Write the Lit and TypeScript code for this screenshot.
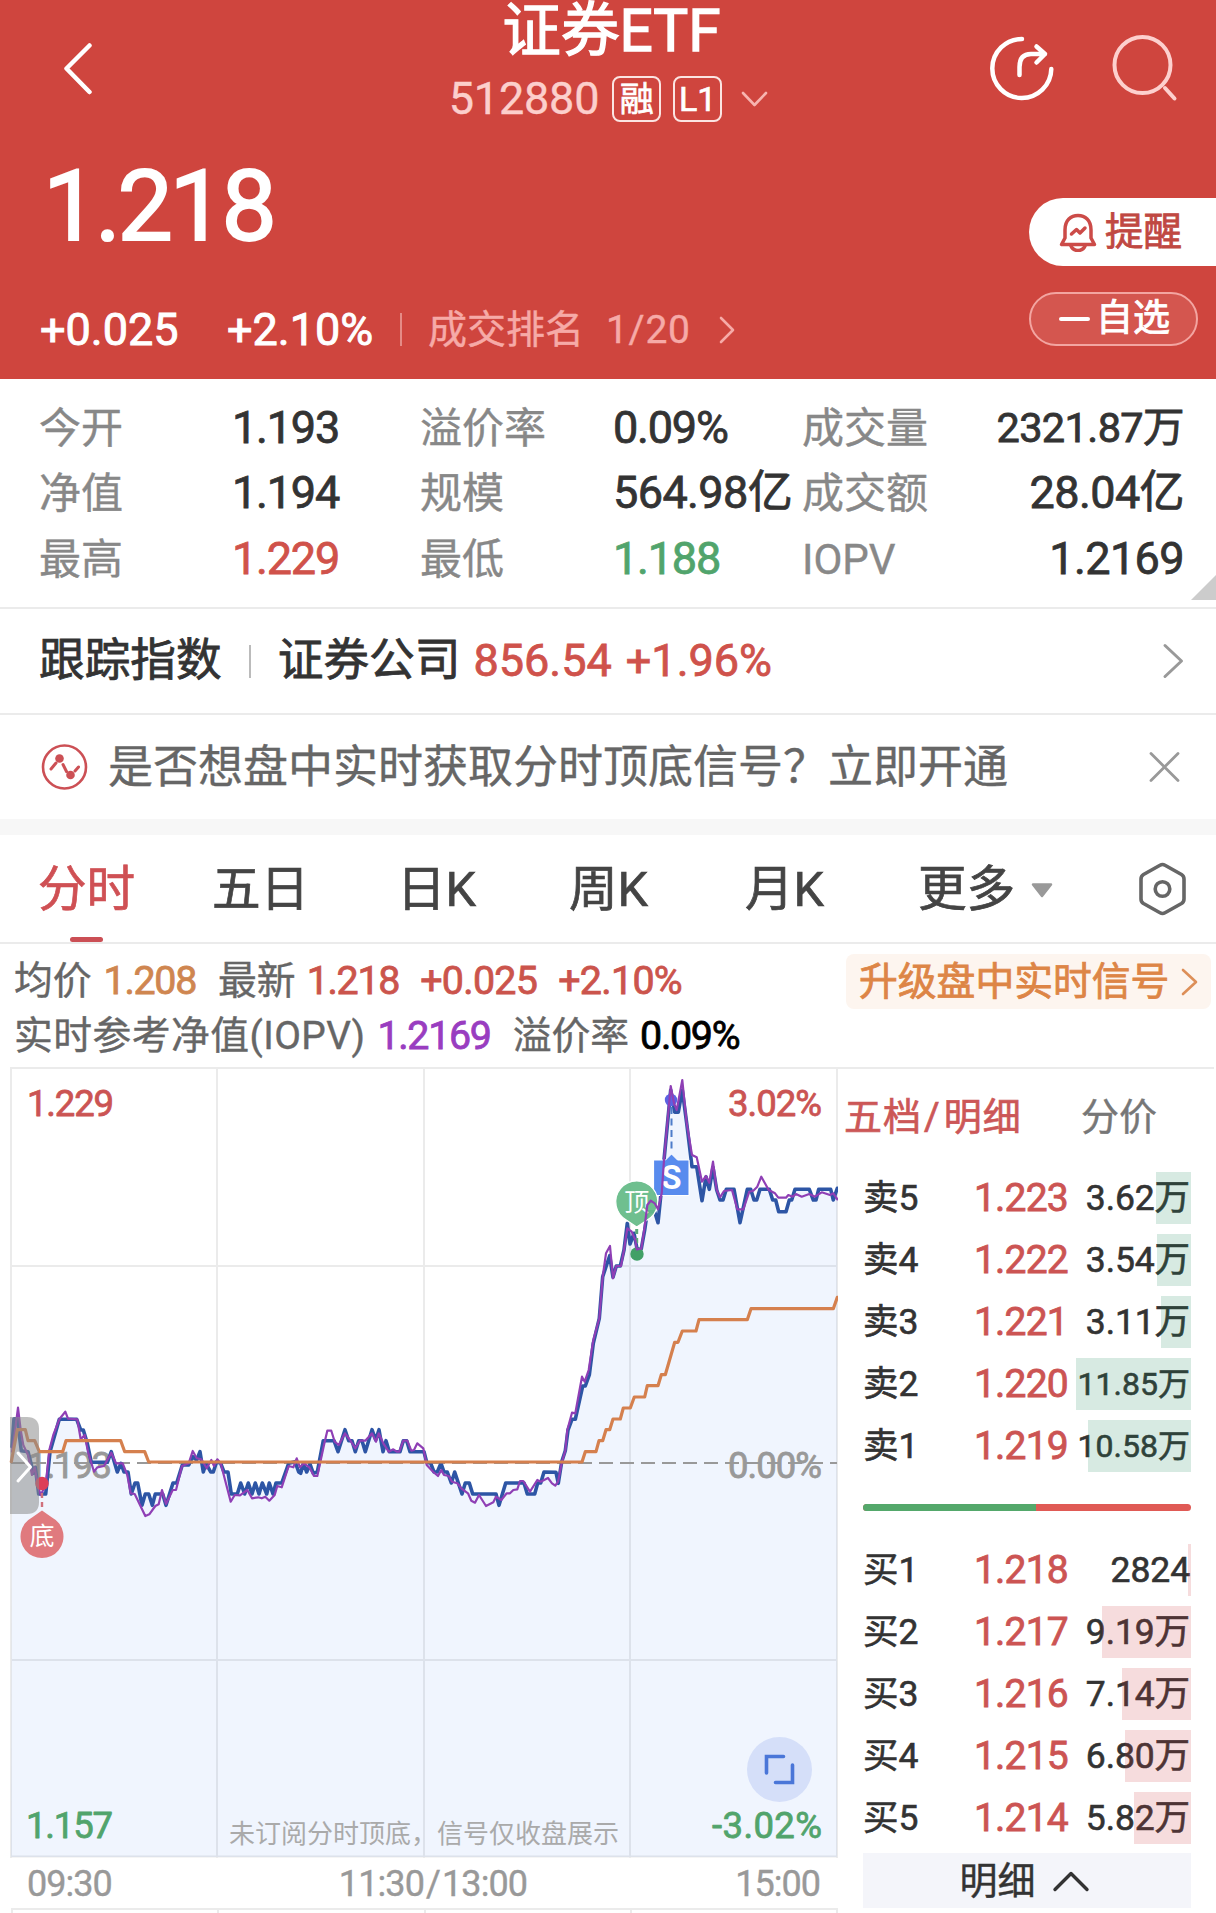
import { LitElement, html, svg, css } from "lit";
import { customElement } from "lit/decorators.js";

type Tone = "ink" | "up" | "down" | "dim";

interface Quote {
  label: string;
  value: string;
  tone?: Tone;
  size?: "small" | "tight";
}

interface Level {
  name: string;
  price: string;
  volume: string;
  bar: number;
}

const QUOTES: Quote[] = [
  { label: "今开", value: "1.193", size: "tight" },
  { label: "溢价率", value: "0.09%", size: "tight" },
  { label: "成交量", value: "2321.87万", size: "small" },
  { label: "净值", value: "1.194", size: "tight" },
  { label: "规模", value: "564.98亿" },
  { label: "成交额", value: "28.04亿" },
  { label: "最高", value: "1.229", tone: "up", size: "tight" },
  { label: "最低", value: "1.188", tone: "down", size: "tight" },
  { label: "IOPV", value: "1.2169" },
];

const ASKS: Level[] = [
  { name: "卖5", price: "1.223", volume: "3.62万", bar: 35 },
  { name: "卖4", price: "1.222", volume: "3.54万", bar: 34 },
  { name: "卖3", price: "1.221", volume: "3.11万", bar: 30 },
  { name: "卖2", price: "1.220", volume: "11.85万", bar: 115 },
  { name: "卖1", price: "1.219", volume: "10.58万", bar: 103 },
];

const BIDS: Level[] = [
  { name: "买1", price: "1.218", volume: "2824", bar: 3 },
  { name: "买2", price: "1.217", volume: "9.19万", bar: 89 },
  { name: "买3", price: "1.216", volume: "7.14万", bar: 69 },
  { name: "买4", price: "1.215", volume: "6.80万", bar: 66 },
  { name: "买5", price: "1.214", volume: "5.82万", bar: 57 },
];

/** Scales a run of samples, stored in thirds of a pixel, to chart pixels. */
const run = (ox: number, oy: number, samples: string): string =>
  samples
    .trim()
    .split(/\s+/)
    .map((pair) => {
      const [x, y] = pair.split(",").map(Number);
      return `${(ox + x / 3).toFixed(1)},${(oy + y / 3).toFixed(1)}`;
    })
    .join(" ");

const PRICE = [
  run(0, 313, `36,200 42,116 52,116 64,212 84,215 96,262 100,280 106,262 116,342 137,342 150,215 178,118
    230,118 242,150 250,150 262,190 274,247 322,247 334,215 352,276 363,250 372,276 384,276 394,342
    405,309 413,309 426,376 436,342 446,342 457,376 466,342 488,342 498,376 519,309 530,309 547,255
    566,255 578,230 590,240 600,215 610,276 618,250 632,276 640,276 650,245 662,250 672,276 684,276
    694,342 712,342 722,309 734,342 745,309 756,342 766,309 777,342 787,309 800,342 808,309 819,342
    828,309 845,309 866,250 885,245 896,276`),
  run(300, 313, `2,280 10,250 20,276 30,252 40,280 52,276 70,182 102,182 114,215 135,149 146,182 156,182
    166,215 176,182 186,182 196,215 216,149 227,180 237,149 249,215 258,182 268,215 300,215 310,182
    320,182 330,215 372,215 380,247 392,250 402,276 412,276 423,250 432,276 442,276 454,309 464,276
    486,342 496,309 508,309 518,342 588,342 597,376 617,309 672,309 682,342 704,342 713,309 722,309
    732,276`),
  run(540, -7, `48,1237 55,1270 65,1205 76,1172 84,1110 96,1078 106,1078 128,978 136,978 148,945 160,850
    178,775 188,650 198,620 209,587 219,652 229,618 241,618 252,570 262,490 270,552 282,520 292,570
    304,566 314,510 322,455 344,455 354,488 365,380 372,300 392,90 404,157 415,157 427,90 440,190
    456,320 470,320 486,422 498,350 508,388 519,322 530,390 540,420 549,420 559,388 582,388 600,488
    622,388 632,388 642,420 650,420 660,388 688,388 698,420 707,420 716,455 738,455 748,420 755,420
    765,388 808,388 820,420 828,420 836,388 872,388 880,420 892,385`),
].join(" ");

const IOPV = [
  run(0, 313, `36,215 44,160 54,83 62,150 70,195 84,225 96,285 104,262 114,320 122,345 137,315 148,210
    160,165 178,118 196,95 204,116 232,118 242,178 254,165 264,215 282,275 292,262 312,258 334,218
    348,250 368,250 382,285 392,340 404,342 436,408 448,403 466,378 476,373 486,330 498,372 518,330
    528,330 546,258 566,250 578,213 590,235 604,238 620,265 634,240 642,258 652,238 662,250 692,365
    704,345 720,346 742,330 756,355 775,352 785,355 796,350 808,362 824,345 832,318 845,322 866,258
    880,262 890,235`),
  run(300, 313, `0,262 12,250 28,262 42,288 52,288 72,195 82,152 94,152 104,185 116,195 135,160 150,180
    166,205 180,182 196,182 216,160 228,185 236,160 250,190 266,215 280,208 290,215 298,215 310,182
    322,182 334,212 342,210 352,190 370,205 380,255 400,276 414,288 424,270 432,285 446,288 456,305
    472,310 484,325 504,340 514,362 525,368 537,345 558,378 580,367 588,350 604,360 620,340 630,340
    640,330 652,328 660,303 670,303 690,335 712,300 722,305`),
  run(540, -7, `24,1254 36,1270 46,1277 54,1265 66,1205 76,1172 82,1110 96,1058 106,1060 126,950 134,965
    146,930 160,840 178,775 188,650 198,580 210,558 219,655 229,618 243,618 252,570 262,505 275,515
    286,540 290,568 304,566 314,500 322,435 332,422 344,430 354,448 365,400 372,300 392,78 402,130
    410,150 427,60 440,190 456,285 470,292 486,365 498,348 508,368 519,305 530,390 540,412 552,393
    576,390 592,448 610,448 628,395 640,392 652,380 664,350 686,390 705,400 715,413 738,413 745,405
    758,410 768,402 785,410 808,402 825,410 845,397 870,405 880,400 892,418`),
].join(" ");

const AVERAGE = [
  run(0, 313, `34,245 52,149 76,149 84,182 104,182 118,215 188,215 198,182 362,182 374,215 434,215
    446,246 900,246`),
  run(540, -7, `0,1206 126,1206 136,1175 168,1175 177,1142 188,1142 198,1109 209,1109 219,1077 241,1077
    250,1044 271,1044 283,1011 314,1011 322,977 354,977 364,944 376,944 404,847 414,847 427,813
    468,813 477,779 622,779 633,746 880,746 892,712`),
].join(" ");

const FONT = css`
  :host {
    display: block;
    font-family: Roboto, "Noto Sans CJK SC", sans-serif;
    font-weight: 400;
    -webkit-text-stroke-width: 0.4px;
  }
  svg {
    display: block;
    fill: none;
    stroke-linecap: round;
    stroke-linejoin: round;
  }
`;

@customElement("quote-header")
class QuoteHeader extends LitElement {
  static styles = [
    FONT,
    css`
      .head {
        display: flex;
        flex-direction: column;
        box-sizing: border-box;
        height: 379px;
        background: #cf453e;
        color: #fff;
      }
      .bar {
        display: grid;
        grid-template-columns: 400px 1fr 400px;
        height: 130px;
      }
      .back {
        padding: 41px 0 0 62px;
      }
      .names {
        display: flex;
        flex-direction: column;
        align-items: center;
        white-space: nowrap;
      }
      .title {
        font-size: 58.6px;
        line-height: 63px;
        padding-left: 7px;
        -webkit-text-stroke-width: 1.3px;
      }
      .sub {
        display: flex;
        align-items: center;
        height: 72px;
        padding-left: 2px;
      }
      .code {
        font-size: 45px;
        line-height: 72px;
        letter-spacing: -0.2px;
        color: #fccfcc;
        margin-right: 13px;
      }
      .tag {
        box-sizing: border-box;
        width: 49px;
        height: 46px;
        margin-right: 12px;
        border: 2px solid #fbe4e2;
        border-radius: 8px;
        font-size: 34px;
        line-height: 43px;
        text-align: center;
        -webkit-text-stroke-width: 0.7px;
      }
      .down {
        margin-left: 6px;
      }
      .tools {
        display: flex;
        justify-content: flex-end;
        gap: 58px;
        padding: 34px 38px 0 0;
      }
      .body {
        display: flex;
        justify-content: space-between;
        flex: 1;
      }
      .price {
        font-size: 98.5px;
        line-height: 154px;
        height: 152px;
        letter-spacing: -3.4px;
        padding-left: 43px;
        -webkit-text-stroke-width: 2px;
      }
      .change {
        display: flex;
        align-items: center;
        padding-left: 40px;
        height: 95px;
        font-size: 45px;
        line-height: 50px;
        -webkit-text-stroke-width: 0.9px;
      }
      .amount {
        width: 187px;
      }
      .percent {
        width: 173px;
      }
      .rule {
        width: 2px;
        height: 33px;
        background: #e58b86;
        margin-right: 26px;
      }
      .rank {
        font-size: 39px;
        color: #f6aaa7;
        width: 178px;
        -webkit-text-stroke-width: 0.4px;
      }
      .place {
        font-size: 39px;
        letter-spacing: 0.7px;
        color: #f6aaa7;
        width: 112px;
        -webkit-text-stroke-width: 0.4px;
      }
      .side {
        display: flex;
        flex-direction: column;
        align-items: flex-start;
        width: 187px;
        padding-top: 68px;
      }
      .alert {
        display: flex;
        align-items: center;
        box-sizing: border-box;
        width: 187px;
        height: 68px;
        padding-left: 30px;
        gap: 8px;
        border-radius: 34px 0 0 34px;
        background: #fff;
        color: #c04842;
        font-size: 38.5px;
        line-height: 66px;
        -webkit-text-stroke-width: 0.8px;
      }
      .fav {
        display: flex;
        align-items: center;
        box-sizing: border-box;
        width: 169px;
        height: 54px;
        margin-top: 26px;
        padding-left: 28px;
        gap: 6px;
        border: 2px solid #f3a5a1;
        border-radius: 27px;
        background: #d4564f;
        font-size: 37px;
        line-height: 50px;
        -webkit-text-stroke-width: 0.9px;
      }
      .minus {
        width: 31px;
        height: 4px;
        border-radius: 2px;
        background: #fff;
      }
    `,
  ];

  render() {
    return html`
      <div class="head">
        <div class="bar">
          <div class="back">
            <svg width="32" height="54" stroke="#fff" stroke-width="4.5">
              <path d="M27.500 4.500 4.500 27.500l23 23.500" />
            </svg>
          </div>
          <div class="names">
            <div class="title">证券ETF</div>
            <div class="sub">
              <span class="code">512880</span>
              <span class="tag">融</span>
              <span class="tag">L1</span>
              <svg class="down" width="29" height="18" stroke="#f7b4b0" stroke-width="2.600">
                <path d="M3 3l11.500 12L26 3" />
              </svg>
            </div>
          </div>
          <div class="tools">
            <svg width="66" height="68" stroke="#fff" stroke-width="4.500">
              <path d="M34 5A29.500 29.500 0 1 0 63.300 35" />
              <path d="M31.500 41V33Q31.500 20 43 20H57M48.500 12.500l8.500 7.500-8.500 8.500" />
            </svg>
            <svg width="66" height="68" stroke="#fdd0ce" stroke-width="4">
              <circle cx="30.500" cy="31" r="28" />
              <path d="M53 54l9.500 10.500" />
            </svg>
          </div>
        </div>
        <div class="body">
          <div>
            <div class="price">1.218</div>
            <div class="change">
              <span class="amount">+0.025</span>
              <span class="percent">+2.10%</span>
              <span class="rule"></span>
              <span class="rank">成交排名</span>
              <span class="place">1/20</span>
              <svg width="18" height="30" stroke="#f6aaa7" stroke-width="2.600">
                <path d="M3 3l12 12L3 27" />
              </svg>
            </div>
          </div>
          <div class="side">
            <div class="alert">
              <svg width="38" height="40" stroke="#cc4b48" stroke-width="3.500">
                <path d="M2.500 32.500H35.500L32 26V18C32 8 26 3.500 19 3.500S6 8 6 18v8z" />
                <path d="M12 34q2 4.500 7 4.500t7-4.500" />
                <path d="M12.500 22l5-4.500 3.500 3.500 5-5" />
              </svg>
              <span>提醒</span>
            </div>
            <div class="fav"><span class="minus"></span><span>自选</span></div>
          </div>
        </div>
      </div>
    `;
  }
}

@customElement("quote-grid")
class QuoteGrid extends LitElement {
  static styles = [
    FONT,
    css`
      .wrap {
        position: relative;
        box-sizing: border-box;
        height: 230px;
        padding: 16px 32px 0 39px;
        border-bottom: 2px solid #ebebeb;
      }
      .grid {
        display: grid;
        grid-template-columns: 193px 188px 193px 189px 110px 1fr;
        grid-auto-rows: 65.3px;
        line-height: 65.3px;
        white-space: nowrap;
      }
      .label {
        font-size: 42px;
        line-height: 67.5px;
        color: #888;
      }
      .value {
        font-size: 45px;
        letter-spacing: -0.6px;
        color: #333;
        -webkit-text-stroke-width: 0.8px;
      }
      .value.last {
        text-align: right;
      }
      .value.small {
        font-size: 41.5px;
      }
      .value.tight {
        letter-spacing: -1.2px;
      }
      .value.up {
        color: #d0524a;
      }
      .value.down {
        color: #51a46c;
      }
      .corner {
        position: absolute;
        right: 0;
        bottom: 7px;
      }
    `,
  ];

  render() {
    return html`
      <div class="wrap">
        <div class="grid">
          ${QUOTES.map(
            (q, i) => html`
              <span class="label">${q.label}</span>
              <span class="value ${q.tone ?? "ink"} ${q.size ?? ""} ${i % 3 === 2 ? "last" : ""}"
                >${q.value}</span
              >
            `,
          )}
        </div>
        <svg class="corner" width="25" height="25"><path d="M25 0V25H0z" fill="#ccc" /></svg>
      </div>
    `;
  }
}

@customElement("info-rows")
class InfoRows extends LitElement {
  static styles = [
    FONT,
    css`
      .row {
        display: flex;
        align-items: center;
        box-sizing: border-box;
        height: 106px;
        padding: 0 31px 0 39px;
        white-space: nowrap;
        line-height: 104px;
      }
      .index {
        border-bottom: 2px solid #ebebeb;
        font-size: 45.7px;
        color: #333;
        -webkit-text-stroke-width: 0.8px;
      }
      .rule {
        width: 2px;
        height: 33px;
        background: #bbb;
        margin: 0 27px;
      }
      .point {
        font-size: 45px;
        color: #cf524b;
        margin-left: 13px;
      }
      .point.rate {
        margin-left: 14px;
      }
      .push {
        margin-left: auto;
      }
      .notice {
        height: 104px;
        padding-right: 34px;
        font-size: 45px;
        color: #666;
      }
      .notice span {
        margin-left: 19px;
        padding-top: 2px;
        line-height: 102px;
      }
      .band {
        height: 16px;
        background: #f7f7f7;
      }
    `,
  ];

  render() {
    return html`
      <div class="row index">
        <span>跟踪指数</span><span class="rule"></span><span>证券公司</span>
        <span class="point">856.54</span><span class="point rate">+1.96%</span>
        <svg class="push" width="24" height="36" stroke="#999" stroke-width="3">
          <path d="M4 2.500l16.500 15.500L4 33.500" />
        </svg>
      </div>
      <div class="row notice">
        <svg width="50" height="50" viewBox="0 0 50 50" stroke="#cc5055">
          <circle cx="25.500" cy="25" r="21.500" stroke-width="2.600" />
          <path d="M12 27l5-6M24 22.500l3.500 7M36 29l3.500-4" stroke-width="3" />
          <circle cx="20.500" cy="16.500" r="4.300" fill="#cc5055" stroke="none" />
          <circle cx="31.500" cy="33" r="4.300" fill="#cc5055" stroke="none" />
        </svg>
        <span>是否想盘中实时获取分时顶底信号？立即开通</span>
        <svg class="push" width="34" height="34" stroke="#999" stroke-width="2.800">
          <path d="M3 3.500l27 27M30 3.500L3 30.500" />
        </svg>
      </div>
      <div class="band"></div>
    `;
  }
}

@customElement("period-tabs")
class PeriodTabs extends LitElement {
  static styles = [
    FONT,
    css`
      .tabs {
        display: grid;
        grid-template-columns: 174px 185px 172px 176px 173px 112px 107px 1fr;
        align-items: center;
        box-sizing: border-box;
        height: 109px;
        padding-left: 38px;
        border-bottom: 2px solid #ebebeb;
        font-size: 48.6px;
        line-height: 109px;
        color: #444;
        white-space: nowrap;
        -webkit-text-stroke-width: 0.7px;
      }
      .tab {
        height: 107px;
      }
      .tab.on {
        position: relative;
        color: #cf5054;
      }
      .tab.on::after {
        content: "";
        position: absolute;
        left: 32px;
        bottom: 0;
        width: 33px;
        height: 5px;
        border-radius: 3px;
        background: #cb4f55;
      }
    `,
  ];

  render() {
    return html`
      <div class="tabs">
        <span class="tab on">分时</span>
        <span class="tab">五日</span>
        <span class="tab">日K</span>
        <span class="tab">周K</span>
        <span class="tab">月K</span>
        <span class="tab">更多</span>
        <svg width="24" height="18"><path d="M3 4.500h18L12 16z" fill="#999" stroke="#999" stroke-width="2.500" /></svg>
        <svg width="52" height="56" stroke="#666" stroke-width="3.600">
          <path d="M23 4.200Q25.500 2.800 28 4.200L44.500 13.500Q47 15 47 18V38Q47 41 44.500 42.500L28 51.800Q25.500 53.200 23 51.800L6.500 42.500Q4 41 4 38V18Q4 15 6.500 13.500z" />
          <circle cx="25.500" cy="28" r="7.300" />
        </svg>
      </div>
    `;
  }
}

@customElement("chart-legend")
class ChartLegend extends LitElement {
  static styles = [
    FONT,
    css`
      .legend {
        box-sizing: border-box;
        height: 123px;
        padding: 10px 5px 0 14px;
        white-space: nowrap;
        font-size: 38.800px;
        line-height: 54px;
        color: #666;
      }
      .line {
        display: flex;
        align-items: flex-start;
      }
      .first {
        height: 55px;
      }
      .num {
        font-size: 39.400px;
        letter-spacing: -1.300px;
        -webkit-text-stroke-width: 0.8px;
      }
      .avg {
        color: #cf8650;
        margin: 0 22px 0 12px;
      }
      .up {
        color: #cb544c;
        margin-left: 11px;
      }
      .up + .up {
        margin-left: 21px;
        letter-spacing: -0.700px;
      }
      .full {
        letter-spacing: 0.450px;
      }
      .iopv {
        color: #993dc0;
        margin: 0 22px 0 12px;
      }
      .rate {
        color: #000;
        margin-left: 11px;
      }
      .upgrade {
        display: flex;
        align-items: center;
        box-sizing: border-box;
        width: 365px;
        height: 55px;
        margin-left: auto;
        padding-left: 13px;
        gap: 12px;
        border-radius: 8px;
        background: #fdf5ef;
        color: #dd8546;
        font-size: 38.800px;
        -webkit-text-stroke-width: 0.8px;
      }
    `,
  ];

  render() {
    return html`
      <div class="legend">
        <div class="line first">
          <span>均价</span><span class="num avg">1.208</span>
          <span>最新</span><span class="num up">1.218</span>
          <span class="num up">+0.025</span><span class="num up">+2.10%</span>
          <div class="upgrade">
            <span>升级盘中实时信号</span>
            <svg width="18" height="28" stroke="#dd8f58" stroke-width="2.600">
              <path d="M2 2l13 12L2 26" />
            </svg>
          </div>
        </div>
        <div class="line">
          <span class="full">实时参考净值(IOPV)</span><span class="num iopv">1.2169</span>
          <span>溢价率</span><span class="num rate">0.09%</span>
        </div>
      </div>
    `;
  }
}

@customElement("minute-chart")
class MinuteChart extends LitElement {
  static styles = [
    FONT,
    css`
      .plot {
        width: 838px;
        height: 791px;
      }
      .plot text {
        font-size: 36.500px;
        stroke-width: 0.8px;
      }
      .plot .up {
        fill: #cb5453;
        stroke: #cb5453;
      }
      .plot .down {
        fill: #51a46c;
        stroke: #51a46c;
      }
      .plot .flat {
        fill: #999;
        stroke: #999;
      }
      .plot .note {
        font-size: 26px;
        fill: #aaa;
      }
      .plot .mark {
        font-size: 25px;
        fill: #fff;
      }
      .plot .sell {
        font-size: 33px;
        font-weight: 700;
        fill: #fff;
      }
      .axis {
        display: flex;
        box-sizing: border-box;
        width: 827px;
        height: 52px;
        margin-left: 11px;
        padding: 0 18px 0 16px;
        border-bottom: 2px solid #ebebeb;
        font-size: 36px;
        line-height: 52px;
        letter-spacing: -1px;
        color: #999;
        justify-content: space-between;
      }
      .mid {
        letter-spacing: -0.900px;
        margin-left: 19px;
      }
      .slash {
        padding: 0 2px;
      }
      .next {
        display: grid;
        grid-template-columns: repeat(4, 1fr);
        box-sizing: border-box;
        width: 827px;
        height: 3px;
        margin-left: 11px;
        border-left: 2px solid #ebebeb;
      }
      .next i {
        border-right: 2px solid #ebebeb;
      }
    `,
  ];

  render() {
    return html`
      <svg class="plot" viewBox="0 0 838 791">
        <g stroke="#ebebeb" stroke-width="2" stroke-linecap="butt">
          <path d="M10 1H838M10 199H838M10 593H838M10 789.500H838" />
          <path d="M11 0V791M217 0V791M424 0V791M630 0V791M837 0V791" />
        </g>
        <polygon points="${PRICE} 837,790 11,790" fill="rgb(88,144,244)" fill-opacity="0.09" />
        <path d="M11 396H837" stroke="#999" stroke-width="2" stroke-dasharray="14 7" stroke-linecap="butt" />
        <text class="up" x="27" y="48.500" textLength="87">1.229</text>
        <text class="up" x="728" y="48.500" textLength="94">3.02%</text>
        <text class="flat" x="27" y="411" textLength="85">1.193</text>
        <text class="flat" x="728" y="411" textLength="94">0.00%</text>
        <text class="down" x="26" y="771" textLength="87">1.157</text>
        <text class="down" x="712" y="771" textLength="110">-3.02%</text>
        <text class="note" x="229" y="776">未订阅分时顶底，信号仅收盘展示</text>
        <polyline points=${PRICE} stroke="#2d55a5" stroke-width="3.600" />
        ${svg`
          <path d="M671.500 40V83" stroke="#4d7cc9" stroke-width="2" stroke-dasharray="7 4.500" stroke-linecap="butt" />
          <path d="M654 93H665.500L671.500 87l6 6H689V128.500H654z" fill="#588bee" stroke="#fff" stroke-width="1" />
          <text class="sell" x="671.500" y="122" text-anchor="middle">S</text>
          <circle cx="671" cy="33" r="6.200" fill="#5b62e2" />
          <path d="M636.700 162V178" stroke="#58a878" stroke-width="3" stroke-dasharray="5 4" stroke-linecap="butt" />
          <path d="M627 153.500A21 21 0 1 1 646.500 153.500L636.700 160z" fill="#66bb88" fill-opacity=".94" stroke="#fff" stroke-width="1.200" />
          <text class="mark" x="636.700" y="144" text-anchor="middle">顶</text>
          <circle cx="637" cy="187" r="6.700" fill="#41a066" />`}
        <polyline points=${IOPV} stroke="#8f3fb5" stroke-width="2.200" />
        <polyline points=${AVERAGE} stroke="#d5804e" stroke-width="3.200" />
        <circle cx="42" cy="416.500" r="6.700" fill="#dd3f58" />
        <path d="M42 426V441" stroke="#d0707c" stroke-width="2.400" stroke-dasharray="5 4" stroke-linecap="butt" />
        <path d="M32 450.500L42 443.500L52 450.500A21.500 21.500 0 1 1 32 450.500z" fill="#e07a7e" />
        <text class="mark" x="42" y="477.500" text-anchor="middle">底</text>
        <path d="M10 350H27Q39 350 39 362V435Q39 447 27 447H10z" fill="#8c8c8c" fill-opacity="0.550" />
        <path d="M18 386l12.500 14L18 414" stroke="#fff" stroke-width="3" />
        <circle cx="779.500" cy="702.500" r="32.500" fill="#d5dff9" />
        <path d="M766.500 706V689.500H783.500M792.500 698V715.500H775.500" stroke="#4a76d8" stroke-width="3.600" stroke-linejoin="miter" />
      </svg>
      <div class="axis">
        <span>09:30</span><span class="mid">11:30<span class="slash">/</span>13:00</span><span>15:00</span>
      </div>
      <div class="next"><i></i><i></i><i></i><i></i></div>
    `;
  }
}

@customElement("order-book")
class OrderBook extends LitElement {
  static styles = [
    FONT,
    css`
      .book {
        display: flex;
        flex-direction: column;
        width: 378px;
      }
      .tabs {
        display: flex;
        box-sizing: border-box;
        width: 376px;
        height: 100px;
        padding: 0 0 0 6px;
        border-top: 2px solid #ebebeb;
        font-size: 38px;
        line-height: 97px;
        color: #777;
      }
      .tabs .on {
        width: 237px;
        color: #cc5757;
        letter-spacing: 1px;
        -webkit-text-stroke-width: 0.7px;
      }
      .slash {
        padding: 0 3px 0 2px;
      }
      .levels {
        display: flex;
        flex-direction: column;
        width: 328px;
        margin-left: 25px;
      }
      .level {
        position: relative;
        display: grid;
        grid-template-columns: 111px 99px 1fr;
        align-items: center;
        height: 62px;
        color: #333;
        font-size: 35.500px;
        line-height: 62px;
        white-space: nowrap;
        -webkit-text-stroke-width: 0.6px;
      }
      .price {
        font-size: 39px;
        letter-spacing: -0.800px;
        color: #cc5453;
        -webkit-text-stroke-width: 0.8px;
      }
      .vol {
        text-align: right;
        padding-right: 1px;
        letter-spacing: -0.100px;
      }
      .vol.long {
        font-size: 32px;
        letter-spacing: 0;
      }
      .fill {
        position: absolute;
        right: 0;
        top: 5px;
        height: 52px;
        background: rgba(33, 138, 94, 0.18);
      }
      .bids .fill {
        background: rgba(205, 60, 66, 0.18);
      }
      .ratio {
        display: flex;
        width: 328px;
        height: 7px;
        margin: 27px 0 28px 25px;
        border-radius: 4px;
        overflow: hidden;
        background: #e05a55;
      }
      .sell {
        width: 173px;
        background: #54a86b;
      }
      .detail {
        display: flex;
        align-items: center;
        justify-content: center;
        box-sizing: border-box;
        width: 328px;
        height: 55px;
        margin: 4px 0 0 25px;
        padding-right: 5px;
        gap: 16px;
        background: #f4f5fa;
        color: #333;
        font-size: 38px;
        line-height: 54px;
      }
    `,
  ];

  private level(l: Level) {
    return html`
      <div class="level">
        <span>${l.name}</span>
        <span class="price">${l.price}</span>
        <span class="vol ${l.volume.length > 5 ? "long" : ""}">${l.volume}</span>
        <span class="fill" style="width:${l.bar}px"></span>
      </div>
    `;
  }

  render() {
    return html`
      <div class="book">
        <div class="tabs"><span class="on">五档<span class="slash">/</span>明细</span><span>分价</span></div>
        <div class="levels asks">${ASKS.map((l) => this.level(l))}</div>
        <div class="ratio"><span class="sell"></span></div>
        <div class="levels bids">${BIDS.map((l) => this.level(l))}</div>
        <div class="detail">
          <span>明细</span>
          <svg width="38" height="22" stroke="#333" stroke-width="3.400">
            <path d="M3 19.500L19 3.500l16 16" />
          </svg>
        </div>
      </div>
    `;
  }
}

@customElement("app-root")
class AppRoot extends LitElement {
  static styles = [
    FONT,
    css`
      .page {
        width: 1216px;
        height: 1913px;
        overflow: hidden;
        background: #fff;
      }
      .market {
        display: grid;
        grid-template-columns: 838px 378px;
      }
    `,
  ];

  render() {
    return html`
      <div class="page">
        <quote-header></quote-header>
        <quote-grid></quote-grid>
        <info-rows></info-rows>
        <period-tabs></period-tabs>
        <chart-legend></chart-legend>
        <div class="market">
          <minute-chart></minute-chart>
          <order-book></order-book>
        </div>
      </div>
    `;
  }
}
